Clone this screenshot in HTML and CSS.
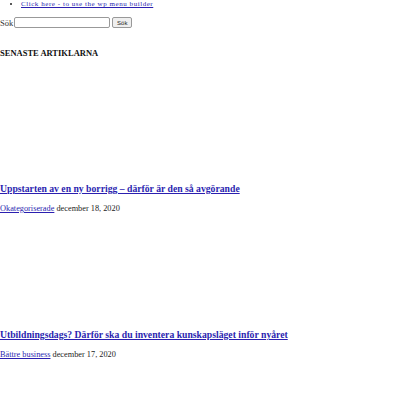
FILE: index.html
```html
<!DOCTYPE html>
<html lang="sv">
  <head>
    <meta charset="UTF-8" />
    <meta name="viewport" content="width=device-width, initial-scale=1.0" />
    <title>Senaste artiklarna</title>
    <link rel="stylesheet" href="styles.css">
  </head>
  <body>
    <ul class="menu">
      <li><a href="#">Click here - to use the wp menu builder</a></li>
    </ul>

    <form class="search" onsubmit="return false">
      <label for="s">Sök</label>
      <input type="text" id="s" />
      <button type="submit">Sök</button>
    </form>

    <h2 class="section-title">SENASTE ARTIKLARNA</h2>

    <!-- Posts -->
    <article class="post">
      <div class="thumb"></div>
      <h3 class="post-title"><a href="#">Uppstarten av en ny borrigg – därför är den så avgörande</a></h3>
      <div class="meta"><a href="#">Okategoriserade</a> december 18, 2020</div>
    </article>

    <article class="post">
      <div class="thumb"></div>
      <h3 class="post-title"><a href="#">Utbildningsdags? Därför ska du inventera kunskapsläget inför nyåret</a></h3>
      <div class="meta"><a href="#">Bättre business</a> december 17, 2020</div>
    </article>
  </body>
</html>
```

FILE: styles.css
```css
body {
  margin: 0;
  font-family: "Liberation Serif", "Times New Roman", serif;
  font-size: 9px;
  line-height: 10px;
  color: #222;
  background: #fff;
}

a {
  color: #2b1fb0;
}

.menu {
  margin: -1px 0 0;
  padding-left: 21px;
  font-size: 7px;
  letter-spacing: 0.55px;
}

.search {
  display: flex;
  align-items: center;
  gap: 2px;
  margin-top: 8px;
  font-size: 8.5px;
}

.search label {
  color: #333;
}

.search input {
  width: 96px;
  height: 11px;
  margin-left: -1px;
  box-sizing: border-box;
  border: 1px solid #999;
  border-radius: 2px;
  padding: 0 2px;
  font-size: 8px;
}

.search button {
  height: 11px;
  width: 20px;
  box-sizing: border-box;
  padding: 0;
  border: 1px solid #999;
  border-radius: 2px;
  background: #efefef;
  font-family: "Liberation Sans", Arial, sans-serif;
  font-size: 6px;
  color: #222;
}

.section-title {
  margin: 20px 0 0;
  font-size: 8.5px;
  line-height: 10px;
  color: #111;
}

.thumb {
  height: 125px;
}

.post + .post .thumb {
  height: 115px;
}

.post-title {
  margin: 0;
  font-size: 9.7px;
  line-height: 12px;
}

.post-title a {
  color: #2b1fb0;
}

.meta {
  margin-top: 9px;
  font-size: 8.3px;
  line-height: 10px;
}
```
